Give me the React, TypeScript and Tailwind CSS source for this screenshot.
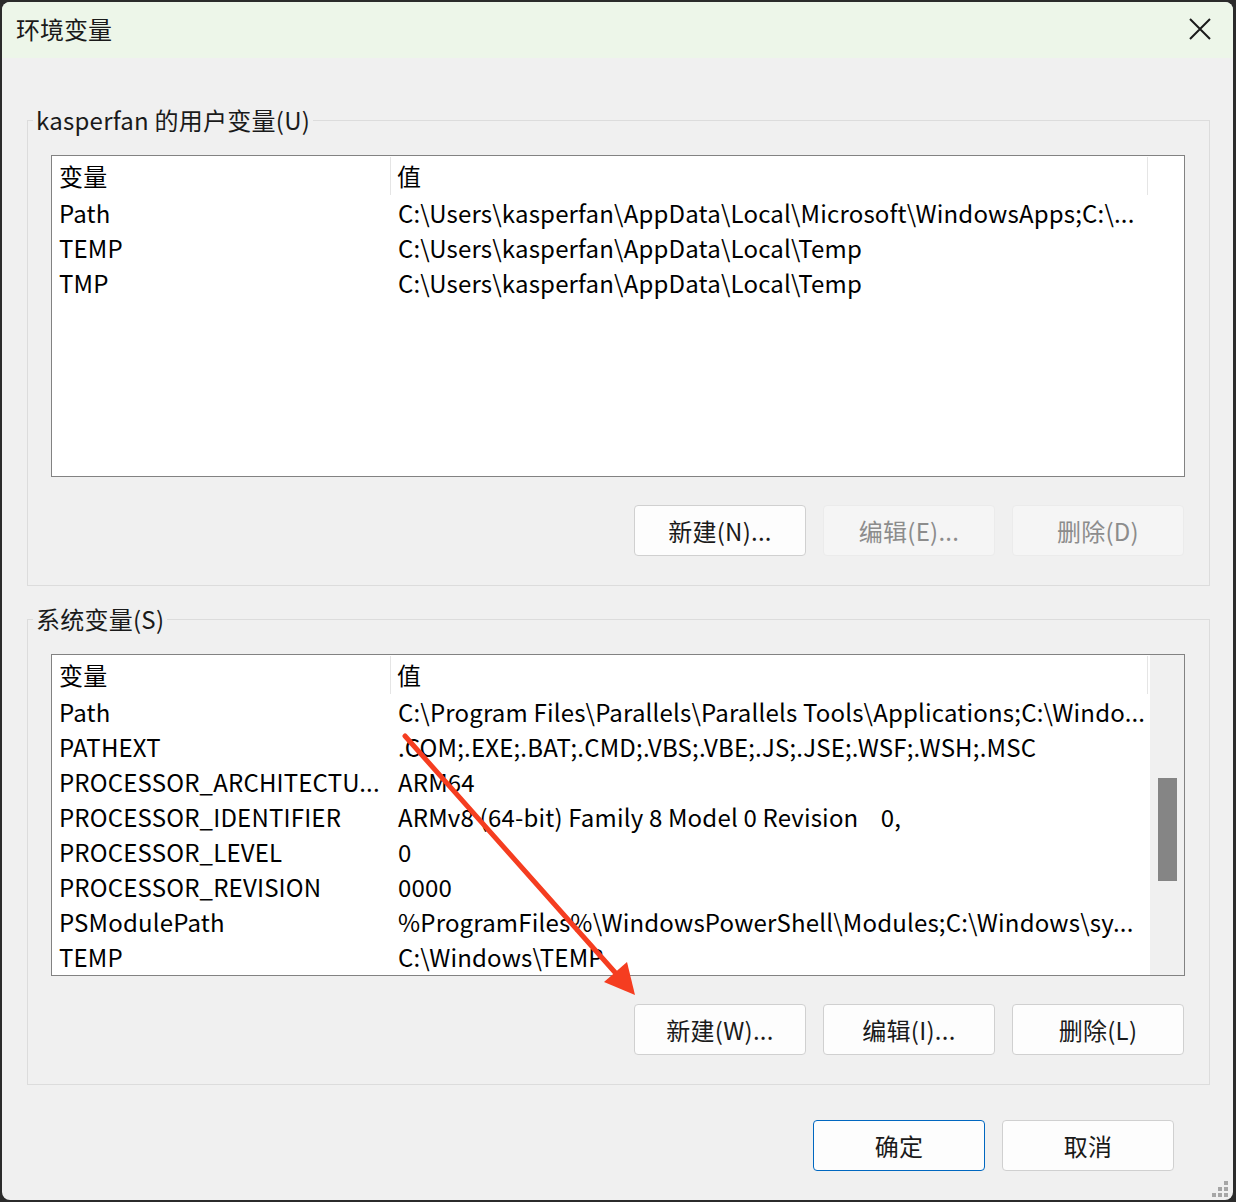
import React from "react";

const FONT = { fontFamily: '"Noto Sans CJK SC", "Noto Sans", sans-serif' };

type Row = [string, string];

const userRows: Row[] = [
  ["Path", "C:\\Users\\kasperfan\\AppData\\Local\\Microsoft\\WindowsApps;C:\\..."],
  ["TEMP", "C:\\Users\\kasperfan\\AppData\\Local\\Temp"],
  ["TMP", "C:\\Users\\kasperfan\\AppData\\Local\\Temp"],
];

const sysRows: Row[] = [
  ["Path", "C:\\Program Files\\Parallels\\Parallels Tools\\Applications;C:\\Windo..."],
  ["PATHEXT", ".COM;.EXE;.BAT;.CMD;.VBS;.VBE;.JS;.JSE;.WSF;.WSH;.MSC"],
  ["PROCESSOR_ARCHITECTU...", "ARM64"],
  ["PROCESSOR_IDENTIFIER", "ARMv8 (64-bit) Family 8 Model 0 Revision\u00a0\u00a0\u00a0\u00a00,"],
  ["PROCESSOR_LEVEL", "0"],
  ["PROCESSOR_REVISION", "0000"],
  ["PSModulePath", "%ProgramFiles%\\WindowsPowerShell\\Modules;C:\\Windows\\sy..."],
  ["TEMP", "C:\\Windows\\TEMP"],
];

function ListView({ rows, scroll }: { rows: Row[]; scroll?: boolean }) {
  return (
    <div className="w-[1134px] h-[322px] bg-white border border-[#828282] flex overflow-hidden">
      <div className="flex-1 pt-[1px] overflow-hidden tracking-[0.18px]">
        <div className="flex h-[38px]">
          <div className="w-[339px] h-[38px] border-r border-[#e5e5e5] pl-[7px] leading-[38px]">变量</div>
          <div className="w-[757px] h-[38px] border-r border-[#e5e5e5] pl-[6px] leading-[38px]">值</div>
        </div>
        {rows.map(([n, v], i) => (
          <div key={i} className="flex h-[35px] leading-[35px] whitespace-nowrap">
            <div className="w-[340px] pl-[7px] overflow-hidden">{n}</div>
            <div className="w-[757px] pl-[6px]">{v}</div>
          </div>
        ))}
      </div>
      {scroll && (
        <div className="w-[34px] bg-[#f0f0f0] flex justify-center pt-[123px] shrink-0 relative z-10">
          <div className="w-[19px] h-[103px] bg-[#858585]" />
        </div>
      )}
    </div>
  );
}

function Btn({
  children,
  disabled,
  primary,
}: {
  children: React.ReactNode;
  disabled?: boolean;
  primary?: boolean;
}) {
  const cls = disabled
    ? "bg-[#f5f5f5] border-[#ebebeb] text-[#8c8c8c]"
    : primary
    ? "bg-[#fdfdfd] border-[#0067c0] text-[#1a1a1a]"
    : "bg-[#fdfdfd] border-[#d0d0d0] text-[#1a1a1a]";
  return (
    <div
      className={`w-[172px] h-[51px] rounded-[4px] border flex items-center justify-center text-[24px] tracking-[0.25px] ${cls}`}
    >
      {children}
    </div>
  );
}

function Group({
  label,
  rows,
  scroll,
  buttons,
  className,
}: {
  label: string;
  rows: Row[];
  scroll?: boolean;
  buttons: React.ReactNode;
  className?: string;
}) {
  return (
    <fieldset className={`w-[1183px] border border-[#dcdcdc] ${className ?? ""}`}>
      <legend className="ml-[5px] px-[3px] leading-[34px] text-[24px] text-[#1a1a1a] tracking-[0.25px]">{label}</legend>
      <div className="pl-[23px] pt-[18px] pb-[29px]">
        <ListView rows={rows} scroll={scroll} />
        <div className="w-[1134px] flex justify-end gap-[17px] mt-[28px] pr-[1px]">{buttons}</div>
      </div>
    </fieldset>
  );
}

export default function App() {
  return (
    <div className="w-[1236px] h-[1202px] bg-[#2b2b2b] pt-[2px] pl-[2px] pr-[3px] pb-[2px]" style={FONT}>
      <div className="relative h-full rounded-[8px] bg-[#f0f0f0] overflow-hidden flex flex-col text-[24px] text-black">
        <div className="h-[56px] bg-[#edf6e9] flex items-center justify-between pl-[14px] pr-[22px] pb-[3px] shrink-0">
          <span className="text-[24px] text-[#1a1a1a] leading-none">环境变量</span>
          <svg width="22" height="22" viewBox="0 0 22 22">
            <path d="M1 1 L21 21 M21 1 L1 21" stroke="#1a1a1a" strokeWidth="2" fill="none" />
          </svg>
        </div>

        <div className="pl-[25px] pt-[45px] flex flex-col">
          <Group
            label="kasperfan 的用户变量(U)"
            rows={userRows}
            buttons={
              <>
                <Btn>新建(N)...</Btn>
                <Btn disabled>编辑(E)...</Btn>
                <Btn disabled>删除(D)</Btn>
              </>
            }
          />
          <Group
            className="mt-[16px]"
            label="系统变量(S)"
            rows={sysRows}
            scroll
            buttons={
              <>
                <Btn>新建(W)...</Btn>
                <Btn>编辑(I)...</Btn>
                <Btn>删除(L)</Btn>
              </>
            }
          />
          <div className="w-[1147px] flex justify-end gap-[17px] mt-[35px]">
            <Btn primary>确定</Btn>
            <Btn>取消</Btn>
          </div>
        </div>

        {/* resize grip */}
        <svg className="absolute right-[5px] bottom-[3px]" width="16" height="16" viewBox="0 0 16 16">
          <rect x="12" y="0" width="4" height="4" fill="#a6a6a6" />
          <rect x="6" y="6" width="4" height="4" fill="#a6a6a6" />
          <rect x="12" y="6" width="4" height="4" fill="#a6a6a6" />
          <rect x="0" y="12" width="4" height="4" fill="#a6a6a6" />
          <rect x="6" y="12" width="4" height="4" fill="#a6a6a6" />
          <rect x="12" y="12" width="4" height="4" fill="#a6a6a6" />
        </svg>

        {/* red arrow annotation */}
        <svg className="absolute left-0 top-0 pointer-events-none z-20" width="1231" height="1198" viewBox="2 2 1231 1198">
          <line x1="405" y1="736" x2="620" y2="978" stroke="#f53d20" strokeWidth="5" strokeLinecap="round" />
          <polygon points="635,995 604,982 627,962" fill="#f53d20" />
        </svg>
      </div>
    </div>
  );
}
